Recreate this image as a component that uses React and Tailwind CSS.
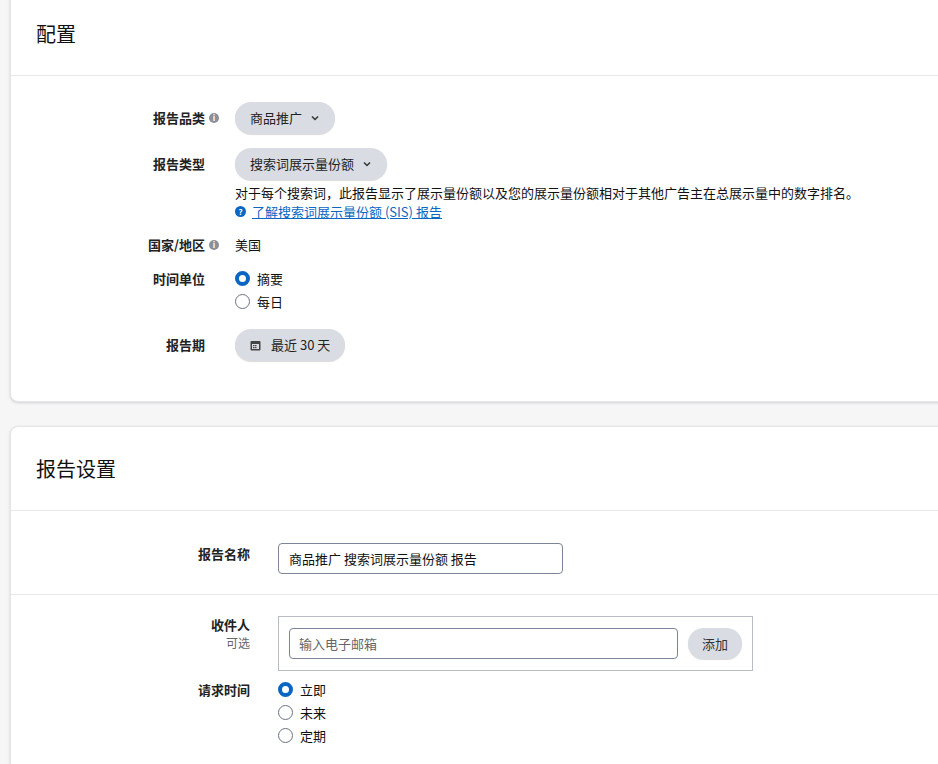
const F = { fontFamily: '"Noto Sans CJK SC", "Noto Sans", sans-serif' };

function Info() {
  return <span className="inline-flex w-[10px] h-[10px] rounded-full bg-[#8a8f98] text-white text-[8px] font-bold items-center justify-center ml-[4px] leading-none">i</span>;
}
function Chevron() {
  return <svg width="10" height="10" viewBox="0 0 10 10" className="ml-[8px]"><path d="M2 3.5 L5 6.5 L8 3.5" stroke="#333" strokeWidth="1.5" fill="none" /></svg>;
}
function Radio({ on, label }) {
  return (
    <div className="flex items-center h-[23px] gap-[7px]">
      {on ? <span className="w-[15px] h-[15px] rounded-full border-[4px] border-[#0a66c2] bg-white box-border" /> :
        <span className="w-[15px] h-[15px] rounded-full border border-[#6b7280] bg-white box-border" />}
      <span className="text-[13px] text-[#111]">{label}</span>
    </div>
  );
}
function Pill({ children }) {
  return <div className="inline-flex items-center h-[32px] px-[15px] rounded-full bg-[#d9dde3] shadow-[0_1px_1px_rgba(0,0,0,0.15)] text-[13px] text-[#222]">{children}</div>;
}

export default function App() {
  return (
    <div style={F} className="bg-[#f6f6f6] w-[938px] h-[764px] overflow-hidden">
      <div className="ml-[10px] bg-white border border-[#e3e5e8] rounded-[8px] shadow-[0_1px_3px_rgba(0,0,0,0.15)] mt-[-10px] w-[940px]">
        <div className="h-[85px] pl-[25px] pt-[28px] text-[20px] text-[#111] border-b border-[#e8e9ec]">配置</div>
        <div className="pt-[26px] pb-[40px] text-[13px]">
          <div className="flex items-center h-[32px]">
            <div className="w-[208px] text-right font-bold text-[#222] flex justify-end items-center">报告品类<Info /></div>
            <div className="ml-[16px]"><Pill>商品推广<Chevron /></Pill></div>
          </div>
          <div className="flex mt-[14px]">
            <div className="w-[194px] text-right font-bold text-[#222] pt-[6px]">报告类型</div>
            <div className="ml-[30px]">
              <Pill>搜索词展示量份额<Chevron /></Pill>
              <div className="mt-[3px] text-[13px] text-[#111] leading-[19px]">对于每个搜索词，此报告显示了展示量份额以及您的展示量份额相对于其他广告主在总展示量中的数字排名。</div>
              <div className="flex items-center text-[13px] leading-[19px]">
                <span className="w-[11px] h-[11px] rounded-full bg-[#0a66c2] text-white text-[8px] font-bold flex items-center justify-center mr-[6px]">?</span>
                <span className="text-[#0a66c2] underline">了解搜索词展示量份额 (SIS) 报告</span>
              </div>
            </div>
          </div>
          <div className="flex items-center mt-[14px] h-[20px]">
            <div className="w-[208px] text-right font-bold text-[#222] flex justify-end items-center">国家/地区<Info /></div>
            <div className="ml-[16px] text-[#111]">美国</div>
          </div>
          <div className="flex mt-[12px]">
            <div className="w-[194px] text-right font-bold text-[#222] pt-[2px]">时间单位</div>
            <div className="ml-[30px]"><Radio on label="摘要" /><Radio label="每日" /></div>
          </div>
          <div className="flex items-center mt-[16px]">
            <div className="w-[194px] text-right font-bold text-[#222]">报告期</div>
            <div className="ml-[30px]"><Pill>
              <svg width="11" height="11" viewBox="0 0 11 11" className="mr-[10px]"><rect x="0.5" y="1" width="10" height="9.5" rx="1" fill="#444" /><rect x="2" y="4" width="7" height="5" fill="#d9dde3" /><rect x="3" y="5" width="1.5" height="1.2" fill="#444"/><rect x="5" y="5" width="1.5" height="1.2" fill="#444"/><rect x="3" y="7" width="1.5" height="1.2" fill="#444"/><rect x="5" y="7" width="1.5" height="1.2" fill="#444"/></svg>
              最近 30 天</Pill></div>
          </div>
        </div>
      </div>

      <div className="ml-[10px] mt-[24px] bg-white border border-[#e3e5e8] rounded-[8px] shadow-[0_1px_3px_rgba(0,0,0,0.15)] w-[940px] h-[400px]">
        <div className="h-[84px] pl-[25px] pt-[27px] text-[20px] text-[#111] border-b border-[#e8e9ec]">报告设置</div>
        <div className="h-[84px] flex pt-[32px] border-b border-[#e8e9ec] text-[13px]">
          <div className="w-[239px] text-right font-bold text-[#222] pt-[1px]">报告名称</div>
          <div className="ml-[28px] w-[285px] h-[31px] border border-[#7b8595] rounded-[4px] px-[10px] flex items-center text-[#111]">商品推广 搜索词展示量份额 报告</div>
        </div>
        <div className="flex pt-[21px] text-[13px]">
          <div className="w-[239px] text-right">
            <div className="font-bold text-[#222] leading-[18px]">收件人</div>
            <div className="text-[12px] text-[#666] leading-[18px]">可选</div>
          </div>
          <div className="ml-[28px] w-[475px] h-[55px] border border-[#b8bcc4] flex items-center px-[10px] gap-[10px]">
            <div className="flex-1 h-[31px] border border-[#7b8595] rounded-[4px] px-[9px] flex items-center text-[#666]">输入电子邮箱</div>
            <div className="h-[31px] px-[14px] rounded-full bg-[#d9dde3] shadow-[0_1px_1px_rgba(0,0,0,0.15)] flex items-center text-[#333]">添加</div>
          </div>
        </div>
        <div className="flex pt-[7px] text-[13px]">
          <div className="w-[239px] text-right font-bold text-[#222] pt-[2px]">请求时间</div>
          <div className="ml-[28px]"><Radio on label="立即" /><Radio label="未来" /><Radio label="定期" /></div>
        </div>
      </div>
    </div>
  );
}
